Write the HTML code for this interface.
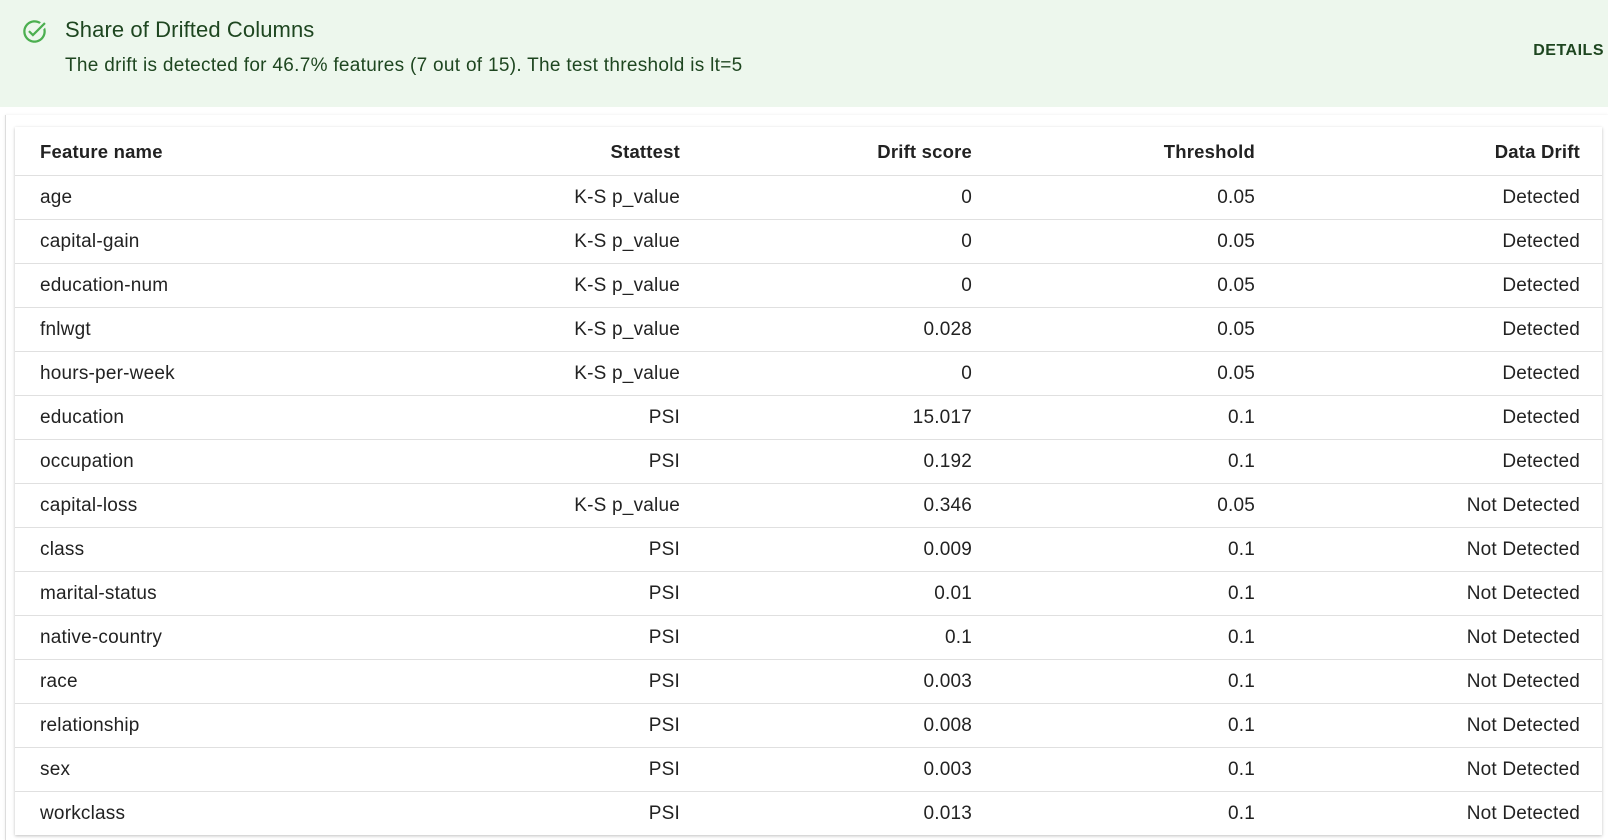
<!DOCTYPE html>
<html><head><meta charset="utf-8"><style>
*{box-sizing:border-box;margin:0;padding:0}
body{width:1608px;height:840px;background:#fff;font-family:"Liberation Sans",Arial,sans-serif;overflow:hidden;position:relative}
.banner{position:absolute;left:0;top:0;width:1608px;height:107px;background:#edf7ed;color:#1e4620}
.icon{position:absolute;left:21px;top:18px}
.title{position:absolute;left:65px;top:17px;font-size:22px;font-weight:500;letter-spacing:0.1px}
.sub{position:absolute;left:65px;top:55px;font-size:19px;letter-spacing:0.3px}
.details{position:absolute;right:4px;top:42px;font-size:16px;font-weight:bold;letter-spacing:0.5px}
.card{position:absolute;left:5px;top:115px;width:1603px;height:725px;border-left:1px solid #ddd;box-shadow:0 0 3px rgba(0,0,0,.08)}
.tbl{position:absolute;left:15px;top:127px;width:1587px;box-shadow:0 1px 3px rgba(0,0,0,.25);background:#fff}
table{border-collapse:collapse;width:100%;font-size:19px;color:#222;letter-spacing:0.2px}
td,th{height:44px;border-bottom:1px solid #e0e0e0;padding:0;font-weight:normal;padding-top:2px}
th{height:48px;font-weight:bold;color:#222;font-size:18.5px}
tr:last-child td{border-bottom:none}
.c1{text-align:left;padding-left:25px;width:285px}
.c2{text-align:right;width:380px}
.c3{text-align:right;width:292px}
.c4{text-align:right;width:283px}
.c5{text-align:right;padding-right:22px}
</style></head><body>
<div class="banner">
<svg class="icon" width="27" height="27" viewBox="0 0 24 24"><path fill="#4caf50" d="M22 5.18 10.59 16.6l-4.24-4.24 1.41-1.41 2.83 2.83 10-10L22 5.18zm-2.21 5.04c.13.57.21 1.170.21 1.78 0 4.420-3.58 8-8 8s-8-3.58-8-8 3.58-8 8-8c1.58 0 3.04.46 4.28 1.25l1.44-1.44C16.1 2.67 14.13 2 12 2 6.48 2 2 6.48 2 12s4.48 10 10 10 10-4.48 10-10c0-1.19-.22-2.330-.6-3.39l-1.61 1.61z"/></svg>
<div class="title">Share of Drifted Columns</div>
<div class="sub">The drift is detected for 46.7% features (7 out of 15). The test threshold is lt=5</div>
<div class="details">DETAILS</div>
</div>
<div class="card"></div>
<div class="tbl"><table>
<tr><th class="c1">Feature name</th><th class="c2">Stattest</th><th class="c3">Drift score</th><th class="c4">Threshold</th><th class="c5">Data Drift</th></tr>
<tr><td class="c1">age</td><td class="c2">K-S p_value</td><td class="c3">0</td><td class="c4">0.05</td><td class="c5">Detected</td></tr>
<tr><td class="c1">capital-gain</td><td class="c2">K-S p_value</td><td class="c3">0</td><td class="c4">0.05</td><td class="c5">Detected</td></tr>
<tr><td class="c1">education-num</td><td class="c2">K-S p_value</td><td class="c3">0</td><td class="c4">0.05</td><td class="c5">Detected</td></tr>
<tr><td class="c1">fnlwgt</td><td class="c2">K-S p_value</td><td class="c3">0.028</td><td class="c4">0.05</td><td class="c5">Detected</td></tr>
<tr><td class="c1">hours-per-week</td><td class="c2">K-S p_value</td><td class="c3">0</td><td class="c4">0.05</td><td class="c5">Detected</td></tr>
<tr><td class="c1">education</td><td class="c2">PSI</td><td class="c3">15.017</td><td class="c4">0.1</td><td class="c5">Detected</td></tr>
<tr><td class="c1">occupation</td><td class="c2">PSI</td><td class="c3">0.192</td><td class="c4">0.1</td><td class="c5">Detected</td></tr>
<tr><td class="c1">capital-loss</td><td class="c2">K-S p_value</td><td class="c3">0.346</td><td class="c4">0.05</td><td class="c5">Not Detected</td></tr>
<tr><td class="c1">class</td><td class="c2">PSI</td><td class="c3">0.009</td><td class="c4">0.1</td><td class="c5">Not Detected</td></tr>
<tr><td class="c1">marital-status</td><td class="c2">PSI</td><td class="c3">0.01</td><td class="c4">0.1</td><td class="c5">Not Detected</td></tr>
<tr><td class="c1">native-country</td><td class="c2">PSI</td><td class="c3">0.1</td><td class="c4">0.1</td><td class="c5">Not Detected</td></tr>
<tr><td class="c1">race</td><td class="c2">PSI</td><td class="c3">0.003</td><td class="c4">0.1</td><td class="c5">Not Detected</td></tr>
<tr><td class="c1">relationship</td><td class="c2">PSI</td><td class="c3">0.008</td><td class="c4">0.1</td><td class="c5">Not Detected</td></tr>
<tr><td class="c1">sex</td><td class="c2">PSI</td><td class="c3">0.003</td><td class="c4">0.1</td><td class="c5">Not Detected</td></tr>
<tr><td class="c1">workclass</td><td class="c2">PSI</td><td class="c3">0.013</td><td class="c4">0.1</td><td class="c5">Not Detected</td></tr>
</table></div>
</body></html>
